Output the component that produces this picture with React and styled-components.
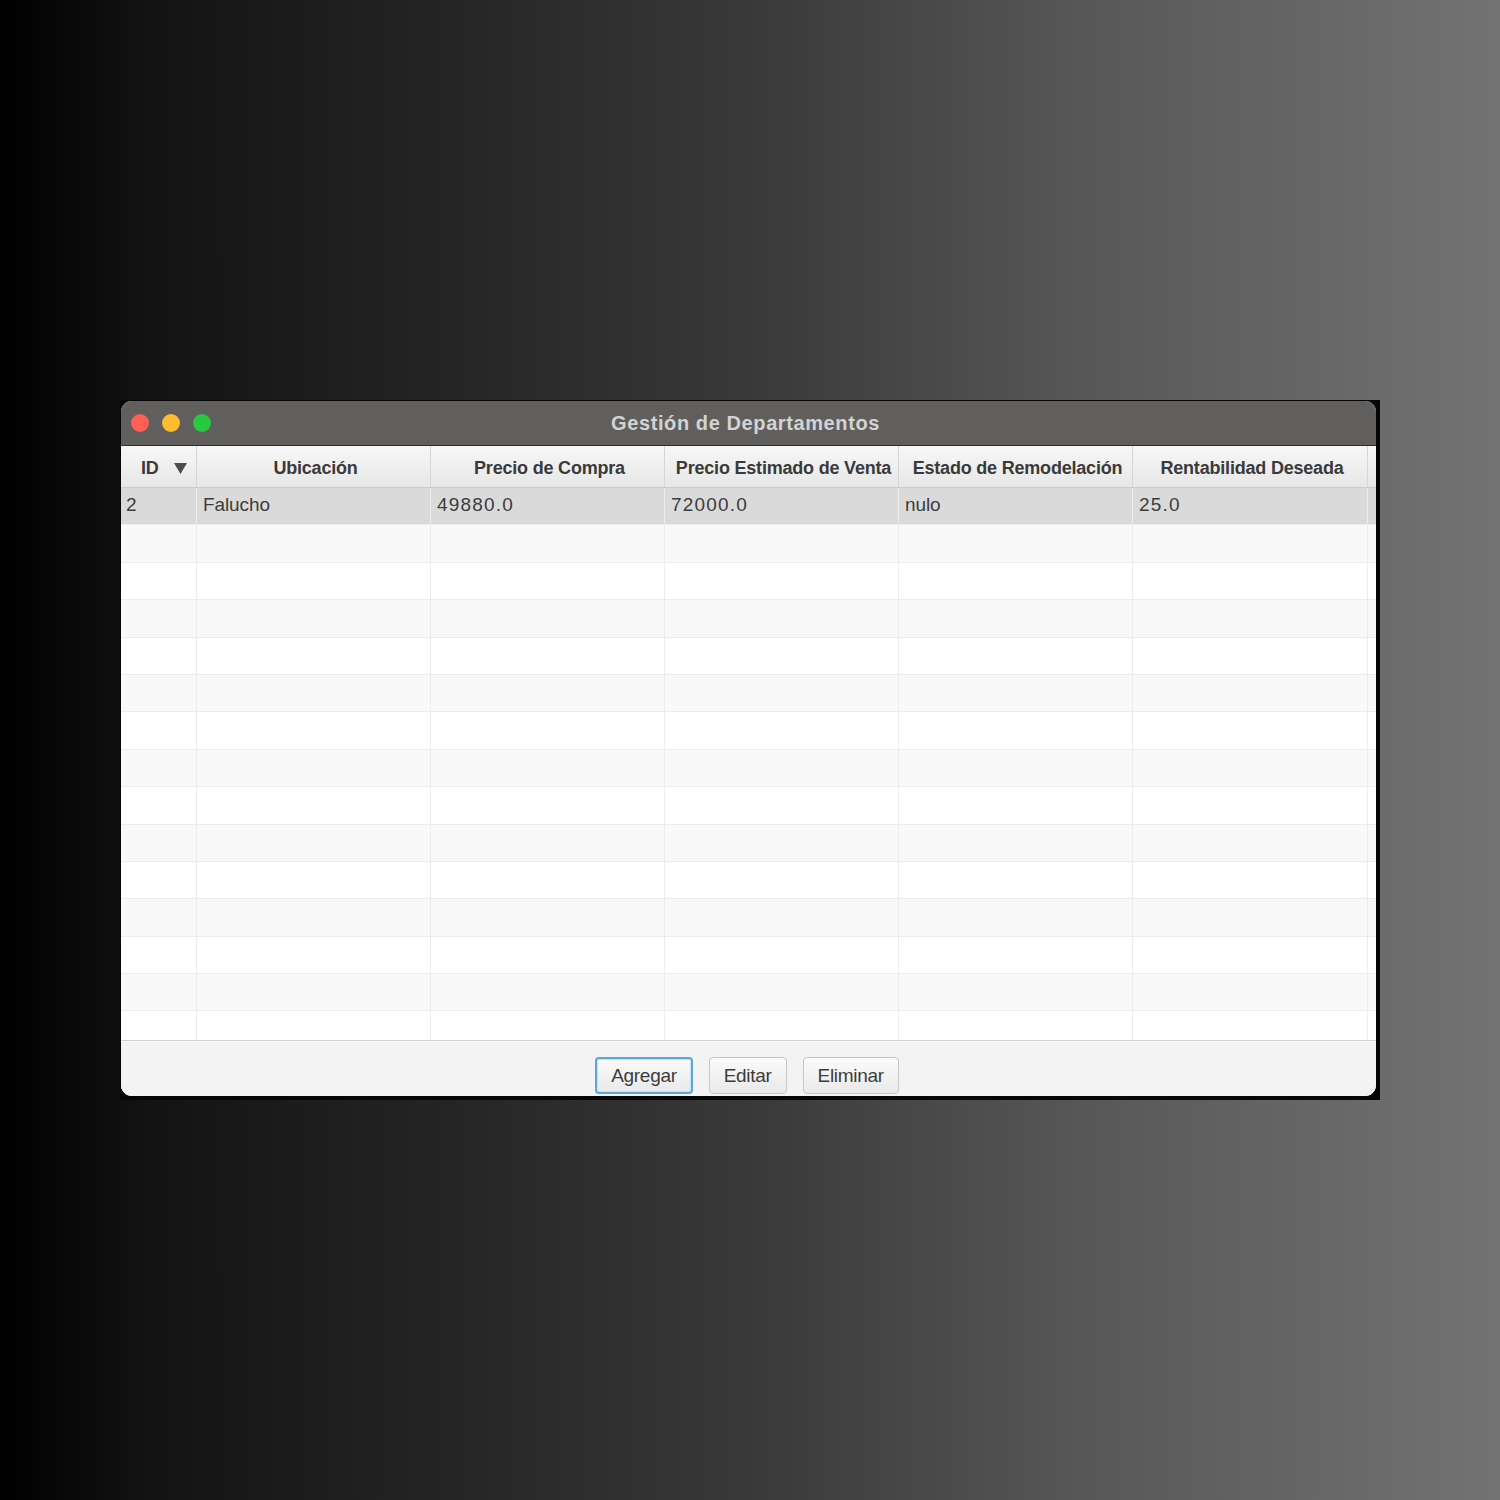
import React from 'react';
import styled, { createGlobalStyle } from 'styled-components';

const GlobalStyle = createGlobalStyle`
  html, body {
    margin: 0;
    padding: 0;
  }
  body {
    font-family: "Liberation Sans", Arial, sans-serif;
  }
`;

const columns = [
  { title: 'ID', sort: true },
  { title: 'Ubicación' },
  { title: 'Precio de Compra' },
  { title: 'Precio Estimado de Venta' },
  { title: 'Estado de Remodelación' },
  { title: 'Rentabilidad Deseada' },
];

const rows = [['2', 'Falucho', '49880.0', '72000.0', 'nulo', '25.0']];
const EMPTY_ROWS = 14;

const GRID = '76px 234px 234px 234px 234px 235px 1fr';

const isNumber = (v) => /^[\d.]+$/.test(v) && v.length > 1;

const App = () => (
  <Page>
    <GlobalStyle />
    <Shot>
      <Window>
        <TitleBar>
          <Lights>
            <Light color="#fe5f57" />
            <Light color="#febc2e" />
            <Light color="#28c840" />
          </Lights>
          <Title>Gestión de Departamentos</Title>
        </TitleBar>

        <Table>
          <HeaderRow>
            {columns.map((c) => (
              <HeaderCell key={c.title} sort={c.sort}>
                <span>{c.title}</span>
                {c.sort && (
                  <svg width="13" height="11" viewBox="0 0 13 11">
                    <polygon points="0,0 13,0 6.5,11" fill="#4d4d4d" />
                  </svg>
                )}
              </HeaderCell>
            ))}
            <HeaderCell />
          </HeaderRow>
          <Body>
            {rows.map((r, i) => (
              <Row key={i} selected>
                {r.map((v, j) => (
                  <Cell key={j} numeric={isNumber(v)}>{v}</Cell>
                ))}
                <Cell />
              </Row>
            ))}
            {Array.from({ length: EMPTY_ROWS }).map((_, i) => (
              <Row key={'e' + i} odd={i % 2 === 0}>
                {columns.map((c) => (
                  <Cell key={c.title} />
                ))}
                <Cell />
              </Row>
            ))}
          </Body>
        </Table>

        <Footer>
          <Button focused>Agregar</Button>
          <Button>Editar</Button>
          <Button>Eliminar</Button>
        </Footer>
      </Window>
    </Shot>
  </Page>
);

export default App;

const Page = styled.div`
  width: 1500px;
  height: 1500px;
  box-sizing: border-box;
  padding: 400px 120px 0;
  background: linear-gradient(
    90deg,
    #000 0%,
    #131313 10%,
    #1c1c1c 20%,
    #252525 30%,
    #393939 50%,
    #575757 72%,
    #737373 100%
  );
`;

const Shot = styled.div`
  width: 1260px;
  height: 700px;
  box-sizing: border-box;
  padding: 1px 4px 4px 1px;
  background: #060606;
`;

const Window = styled.div`
  height: 100%;
  display: flex;
  flex-direction: column;
  border-radius: 11px;
  overflow: hidden;
  background: #f3f3f3;
`;

const TitleBar = styled.div`
  position: relative;
  height: 44px;
  flex: none;
  display: flex;
  align-items: center;
  justify-content: center;
  background: #605f5d;
  border-bottom: 1px solid #2c2c2c;
`;

const Lights = styled.div`
  position: absolute;
  left: 10px;
  top: 13px;
  display: flex;
  gap: 13px;
`;

const Light = styled.div`
  width: 18px;
  height: 18px;
  border-radius: 50%;
  background: ${(p) => p.color};
`;

const Title = styled.div`
  font-size: 20px;
  font-weight: bold;
  color: #d3d3d3;
  letter-spacing: 0.6px;
  margin-left: -6px;
`;

const Table = styled.div`
  flex: none;
  display: flex;
  flex-direction: column;
  border-bottom: 1px solid #cfcfcf;
`;

const HeaderRow = styled.div`
  display: grid;
  grid-template-columns: ${GRID};
  height: 41px;
  background: linear-gradient(#f7f7f7, #e7e7e7);
  border-bottom: 1px solid #c9c9c9;
`;

const HeaderCell = styled.div`
  display: flex;
  align-items: center;
  justify-content: ${(p) => (p.sort ? 'space-between' : 'center')};
  padding: ${(p) => (p.sort ? '3px 9px 0 20px' : '3px 0 0 4px')};
  border-right: 1px solid #d6d6d6;
  font-size: 18px;
  font-weight: bold;
  letter-spacing: -0.2px;
  color: #3a3a3a;
  white-space: nowrap;
  &:last-child {
    border-right: none;
  }
`;

const Body = styled.div`
  height: 552px;
  overflow: hidden;
  background: #fff;
`;

const Row = styled.div`
  display: grid;
  grid-template-columns: ${GRID};
  height: 37.4px;
  box-sizing: border-box;
  border-bottom: 1px solid #ececec;
  background: ${(p) => (p.selected ? '#dadada' : p.odd ? '#f9f9f9' : '#ffffff')};
`;

const Cell = styled.div`
  display: flex;
  align-items: center;
  padding: 0 0 3px 6px;
  border-right: 1px solid #ececec;
  font-size: 19px;
  color: #3c3c3c;
  letter-spacing: ${(p) => (p.numeric ? '1.2px' : '-0.1px')};
  white-space: nowrap;
  &:first-child {
    padding-left: 5px;
  }
  &:last-child {
    border-right: none;
  }
`;

const Footer = styled.div`
  flex: 1;
  display: flex;
  justify-content: center;
  align-items: flex-end;
  gap: 16px;
  padding-right: 3px;
  background: #f3f3f3;
  border-top: 1px solid #fbfbfb;
`;

const Button = styled.button`
  height: 37px;
  margin-bottom: 2px;
  padding: 0 ${(p) => (p.focused ? '14px' : '14px')};
  box-sizing: border-box;
  font-family: "Liberation Sans", Arial, sans-serif;
  font-size: 19px;
  letter-spacing: -0.3px;
  color: #3c3c3c;
  border-radius: 4px;
  background: linear-gradient(#fbfbfb, #e9e9e9);
  border: ${(p) => (p.focused ? '2px solid #58a7dd' : '1px solid #c6c6c6')};
  box-shadow: ${(p) => (p.focused ? 'inset 0 0 0 1px #c9e3f4' : 'none')};
`;
